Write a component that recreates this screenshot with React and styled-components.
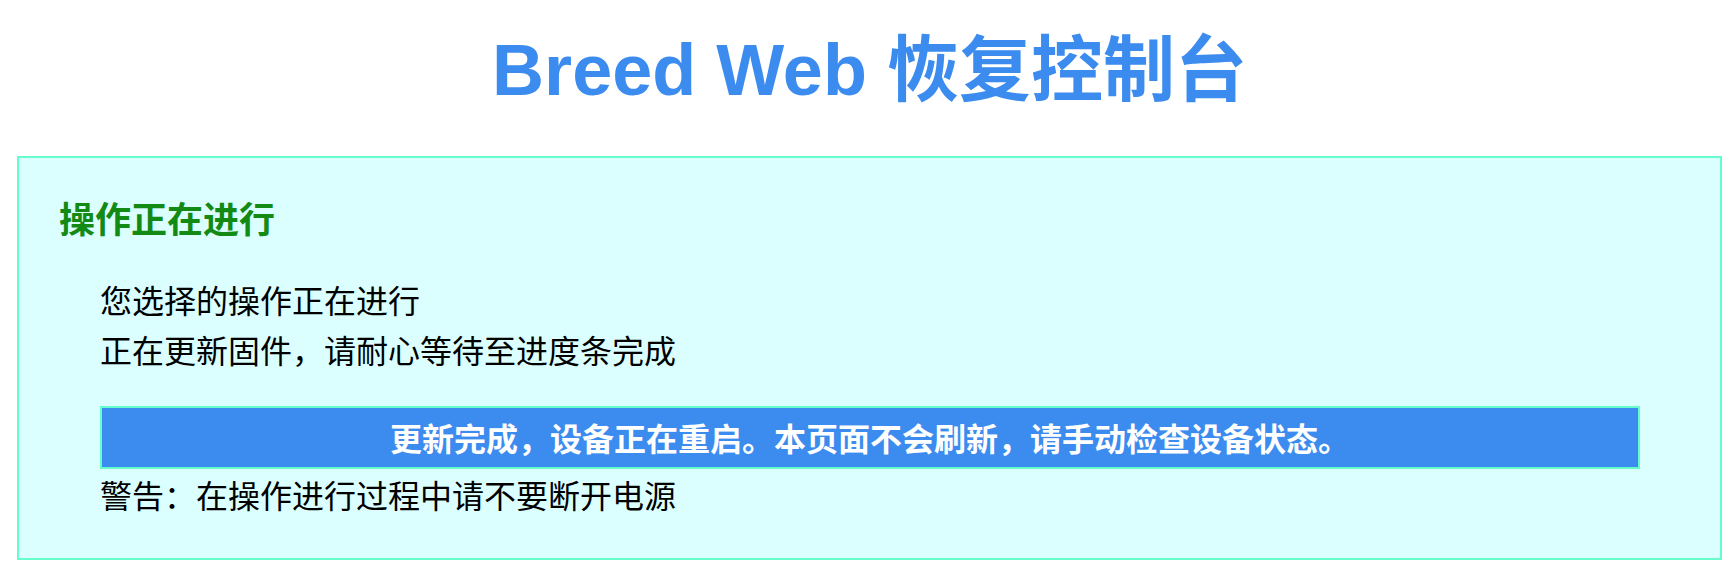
import { createGlobalStyle, styled } from "styled-components"

const GlobalStyle = createGlobalStyle`
  body {
    margin: 0;
    background: #ffffff;
    font-family: "Noto Sans CJK SC", "Liberation Sans", sans-serif;
    color: #000000;
  }
`

const Page = styled.div`
  padding: 0 12px 0 17px;
`

const Title = styled.h1`
  margin: 0;
  padding: 34px 0 50px;
  font-family: "Liberation Sans", "Noto Sans CJK SC", sans-serif;
  font-size: 72px;
  line-height: 72px;
  font-weight: bold;
  text-align: center;
  color: #3c8cef;
`

const Panel = styled.section`
  border: 2px solid #66fccc;
  background-color: #dbffff;
  padding: 34px 40px 39px;
`

const Heading = styled.h3`
  margin: 0 0 32px;
  font-size: 36px;
  line-height: 50px;
  font-weight: bold;
  color: #138a13;
`

const Body = styled.div`
  margin: 0 40px 0 41px;
  font-size: 32px;
  line-height: 50px;
`

const Line = styled.p`
  margin: 0;
`

const Notice = styled.div`
  margin-top: 32px;
  border: 2px solid #66fccc;
  background-color: #3c8cef;
  color: #ffffff;
  font-size: 32px;
  font-weight: bold;
  line-height: 59px;
  text-align: center;
`

const App = () => {
  return (
    <Page>
      <GlobalStyle />
      <Title>Breed Web 恢复控制台</Title>
      <Panel>
        <Heading>操作正在进行</Heading>
        <Body>
          <Line>您选择的操作正在进行</Line>
          <Line>正在更新固件，请耐心等待至进度条完成</Line>
          <Notice>更新完成，设备正在重启。本页面不会刷新，请手动检查设备状态。</Notice>
          <Line>警告：在操作进行过程中请不要断开电源</Line>
        </Body>
      </Panel>
    </Page>
  )
}

export default App
